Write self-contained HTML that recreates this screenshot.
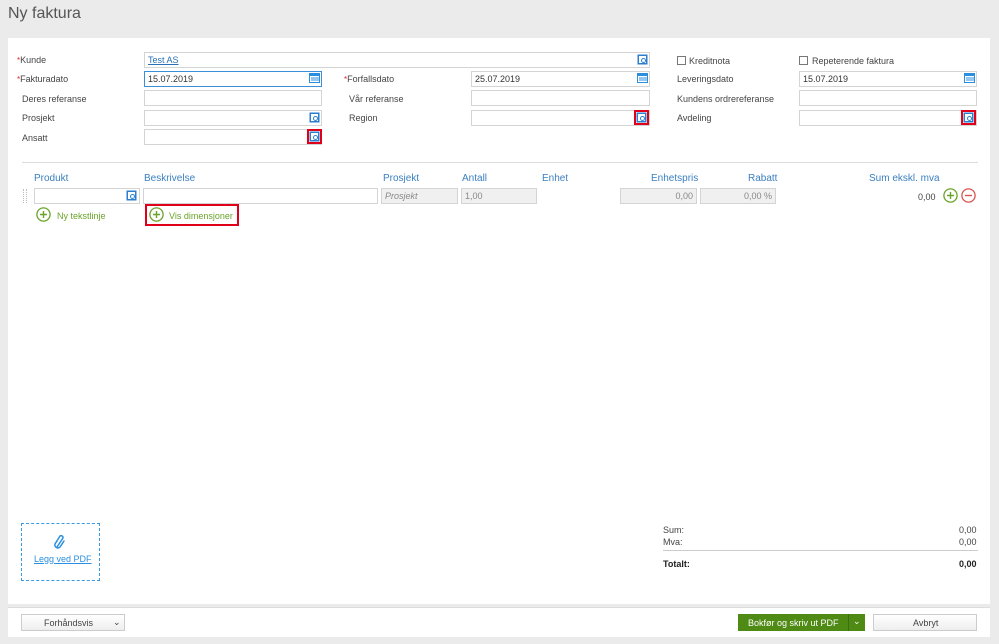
<!DOCTYPE html>
<html><head><meta charset="utf-8"><style>
*{box-sizing:border-box;margin:0;padding:0}
body{width:999px;height:644px;background:#ebebeb;font-family:"Liberation Sans",sans-serif;font-size:9px;color:#444;position:relative;overflow:hidden}
.a{position:absolute}
.t{position:absolute;white-space:nowrap}
.in{position:absolute;height:16px;border:1px solid #d4d4d4;background:#fff;font-size:9px;padding:2px 3px;color:#333}
.gr{background:#f0f0f0;color:#888}
.h{position:absolute;color:#3a7fc1;font-size:10px;white-space:nowrap}
.req{color:#d22;font-size:8px}
.ic{position:absolute;width:11px;height:11px}
.red{outline:2px solid #e0001a;outline-offset:0}
.cb{position:absolute;width:9px;height:9px;border:1px solid #777;background:#fff}
.circ{position:absolute;width:15px;height:15px}
</style></head><body>
<div class="t" style="left:8px;top:5px;font-size:16px;color:#555">Ny faktura</div>
<div class="a" style="left:8px;top:38px;width:982px;height:566px;background:#fff"></div>
<div class="a" style="left:8px;top:607px;width:982px;height:30px;background:#fff;border-top:1px solid #ddd"></div>

<div class="t" style="left:17px;top:55px"><span class="req">*</span>Kunde</div>
<div class="t" style="left:17px;top:74px"><span class="req">*</span>Fakturadato</div>
<div class="t" style="left:22px;top:94px">Deres referanse</div>
<div class="t" style="left:22px;top:113px">Prosjekt</div>
<div class="t" style="left:22px;top:133px">Ansatt</div>
<div class="in" style="left:144px;top:52px;width:506px;color:#2b6fb5;text-decoration:underline">Test AS</div>
<div class="in" style="left:144px;top:71px;width:178px;border-color:#3a8fd8">15.07.2019</div>
<div class="in" style="left:144px;top:90px;width:178px"></div>
<div class="in" style="left:144px;top:110px;width:178px"></div>
<div class="in" style="left:144px;top:129px;width:178px"></div>

<div class="t" style="left:344px;top:74px"><span class="req">*</span>Forfallsdato</div>
<div class="t" style="left:349px;top:94px">Vår referanse</div>
<div class="t" style="left:349px;top:113px">Region</div>
<div class="in" style="left:471px;top:71px;width:179px">25.07.2019</div>
<div class="in" style="left:471px;top:90px;width:179px"></div>
<div class="in" style="left:471px;top:110px;width:179px"></div>

<div class="cb" style="left:677px;top:56px"></div><div class="t" style="left:689px;top:56px">Kreditnota</div>
<div class="cb" style="left:799px;top:56px"></div><div class="t" style="left:812px;top:56px">Repeterende faktura</div>
<div class="t" style="left:677px;top:74px">Leveringsdato</div>
<div class="t" style="left:677px;top:94px">Kundens ordrereferanse</div>
<div class="t" style="left:677px;top:113px">Avdeling</div>
<div class="in" style="left:799px;top:71px;width:178px">15.07.2019</div>
<div class="in" style="left:799px;top:90px;width:178px"></div>
<div class="in" style="left:799px;top:110px;width:178px"></div>

<svg class="ic" style="left:637px;top:54px" viewBox="0 0 11 11"><rect x="0.5" y="0.5" width="10" height="10" fill="#2b7fd0"/><rect x="2" y="2" width="7" height="7" fill="#fff"/><circle cx="6.5" cy="6.5" r="2" fill="none" stroke="#2b7fd0"/></svg>
<svg class="ic" style="left:309px;top:72px" viewBox="0 0 11 11"><rect x="0.5" y="1.5" width="10" height="9" fill="#fff" stroke="#2b8fe0"/><rect x="0.5" y="1.5" width="10" height="2.5" fill="#2b8fe0"/><path d="M3 5v4M5 5v4M7 5v4M9 5v4" stroke="#2b8fe0"/></svg>
<svg class="ic" style="left:637px;top:72px" viewBox="0 0 11 11"><rect x="0.5" y="1.5" width="10" height="9" fill="#fff" stroke="#2b8fe0"/><rect x="0.5" y="1.5" width="10" height="2.5" fill="#2b8fe0"/><path d="M3 5v4M5 5v4M7 5v4M9 5v4" stroke="#2b8fe0"/></svg>
<svg class="ic" style="left:964px;top:72px" viewBox="0 0 11 11"><rect x="0.5" y="1.5" width="10" height="9" fill="#fff" stroke="#2b8fe0"/><rect x="0.5" y="1.5" width="10" height="2.5" fill="#2b8fe0"/><path d="M3 5v4M5 5v4M7 5v4M9 5v4" stroke="#2b8fe0"/></svg>
<svg class="ic" style="left:309px;top:112px" viewBox="0 0 11 11"><rect x="0.5" y="0.5" width="10" height="10" fill="#2b7fd0"/><rect x="2" y="2" width="7" height="7" fill="#fff"/><circle cx="6.5" cy="6.5" r="2" fill="none" stroke="#2b7fd0"/></svg>
<svg class="ic red" style="left:309px;top:131px" viewBox="0 0 11 11"><rect x="0.5" y="0.5" width="10" height="10" fill="#2b7fd0"/><rect x="2" y="2" width="7" height="7" fill="#fff"/><circle cx="6.5" cy="6.5" r="2" fill="none" stroke="#2b7fd0"/></svg>
<svg class="ic red" style="left:636px;top:112px" viewBox="0 0 11 11"><rect x="0.5" y="0.5" width="10" height="10" fill="#2b7fd0"/><rect x="2" y="2" width="7" height="7" fill="#fff"/><circle cx="6.5" cy="6.5" r="2" fill="none" stroke="#2b7fd0"/></svg>
<svg class="ic red" style="left:963px;top:112px" viewBox="0 0 11 11"><rect x="0.5" y="0.5" width="10" height="10" fill="#2b7fd0"/><rect x="2" y="2" width="7" height="7" fill="#fff"/><circle cx="6.5" cy="6.5" r="2" fill="none" stroke="#2b7fd0"/></svg>

<div class="a" style="left:22px;top:162px;width:956px;height:1px;background:#ddd"></div>
<div class="h" style="left:34px;top:173px">Produkt</div>
<div class="h" style="left:144px;top:173px">Beskrivelse</div>
<div class="h" style="left:383px;top:173px">Prosjekt</div>
<div class="h" style="left:462px;top:173px">Antall</div>
<div class="h" style="left:542px;top:173px">Enhet</div>
<div class="h" style="left:651px;top:173px">Enhetspris</div>
<div class="h" style="left:748px;top:173px">Rabatt</div>
<div class="h" style="left:869px;top:173px">Sum ekskl. mva</div>
<div class="a" style="left:23px;top:189px;width:4px;height:14px;border-left:1px dotted #bbb;border-right:1px dotted #bbb"></div>
<div class="in" style="left:34px;top:188px;width:106px"></div>
<svg class="ic" style="left:126px;top:190px" viewBox="0 0 11 11"><rect x="0.5" y="0.5" width="10" height="10" fill="#2b7fd0"/><rect x="2" y="2" width="7" height="7" fill="#fff"/><circle cx="6.5" cy="6.5" r="2" fill="none" stroke="#2b7fd0"/></svg>
<div class="in" style="left:143px;top:188px;width:235px"></div>
<div class="in gr" style="left:381px;top:188px;width:77px;font-style:italic">Prosjekt</div>
<div class="in gr" style="left:461px;top:188px;width:76px">1,00</div>
<div class="in gr" style="left:620px;top:188px;width:77px;text-align:right">0,00</div>
<div class="in gr" style="left:700px;top:188px;width:76px;text-align:right">0,00 %</div>
<div class="t" style="left:918px;top:192px">0,00</div>
<svg class="circ" style="left:943px;top:188px" viewBox="0 0 15 15"><circle cx="7.5" cy="7.5" r="6.6" fill="none" stroke="#6aa329" stroke-width="1.3"/><path d="M7.5 4v7M4 7.5h7" stroke="#6aa329" stroke-width="1.4"/></svg>
<svg class="circ" style="left:961px;top:188px" viewBox="0 0 15 15"><circle cx="7.5" cy="7.5" r="6.6" fill="none" stroke="#d9534f" stroke-width="1.3"/><path d="M4 7.5h7" stroke="#d9534f" stroke-width="1.4"/></svg>

<svg class="circ" style="left:36px;top:207px" viewBox="0 0 15 15"><circle cx="7.5" cy="7.5" r="6.6" fill="none" stroke="#6aa329" stroke-width="1.3"/><path d="M7.5 4v7M4 7.5h7" stroke="#6aa329" stroke-width="1.4"/></svg>
<div class="t" style="left:57px;top:211px;color:#6aa329">Ny tekstlinje</div>
<div class="a" style="left:145px;top:204px;width:94px;height:22px;border:2px solid #e0001a"></div>
<svg class="circ" style="left:149px;top:207px" viewBox="0 0 15 15"><circle cx="7.5" cy="7.5" r="6.6" fill="none" stroke="#6aa329" stroke-width="1.3"/><path d="M7.5 4v7M4 7.5h7" stroke="#6aa329" stroke-width="1.4"/></svg>
<div class="t" style="left:169px;top:211px;color:#6aa329">Vis dimensjoner</div>

<div class="a" style="left:21px;top:523px;width:79px;height:58px;border:1px dashed #3a9ae0"></div>
<svg class="a" style="left:53px;top:534px;width:14px;height:18px" viewBox="0 0 14 18"><path d="M4 13 L10 4 A2 2 0 0 0 7 2 L2 10 A3 3 0 0 0 7 13 L11 7" fill="none" stroke="#2b8fe0" stroke-width="1.5" stroke-linecap="round"/></svg>
<div class="t" style="left:34px;top:554px;color:#2b8fe0;text-decoration:underline">Legg ved PDF</div>

<div class="t" style="left:663px;top:525px">Sum:</div><div class="t" style="left:959px;top:525px">0,00</div>
<div class="t" style="left:663px;top:537px">Mva:</div><div class="t" style="left:959px;top:537px">0,00</div>
<div class="a" style="left:663px;top:550px;width:315px;height:1px;background:#ccc"></div>
<div class="t" style="left:663px;top:559px;font-weight:bold;color:#222">Totalt:</div><div class="t" style="left:959px;top:559px;font-weight:bold;color:#222">0,00</div>

<div class="a" style="left:21px;top:614px;width:104px;height:17px;border:1px solid #ccc;background:linear-gradient(#fff,#eee)"></div>
<div class="t" style="left:44px;top:618px">Forhåndsvis</div><div class="t" style="left:113px;top:617px">⌄</div>
<div class="a" style="left:738px;top:614px;width:127px;height:17px;background:#4f8a14"></div>
<div class="a" style="left:848px;top:614px;width:1px;height:17px;background:#3e6f0f"></div>
<div class="t" style="left:748px;top:618px;color:#fff">Bokfør og skriv ut PDF</div><div class="t" style="left:853px;top:616px;color:#fff">⌄</div>
<div class="a" style="left:873px;top:614px;width:104px;height:17px;border:1px solid #ccc;background:linear-gradient(#fff,#eee)"></div>
<div class="t" style="left:913px;top:618px">Avbryt</div>
</body></html>
